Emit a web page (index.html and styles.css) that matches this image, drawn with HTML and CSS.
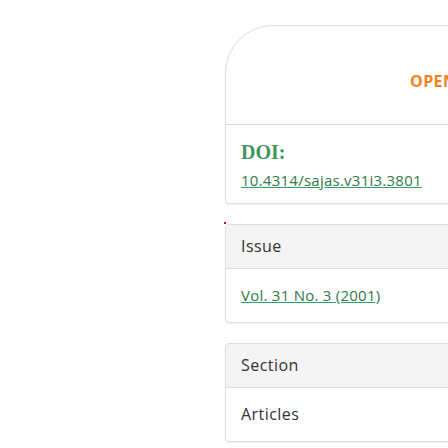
FILE: index.html
```html
<!DOCTYPE html>
<html>
<head>
<meta charset="utf-8">
<link rel="stylesheet" href="styles.css">
</head>
<body>
<div class="page">
  <div class="column">
    <section class="card card-doi">
      <div class="access"><span class="open">OPEN ACCESS</span></div>
      <div class="doi">
        <h2 class="doi-label">DOI:</h2>
        <div class="doi-value"><a class="link" href="#">10.4314/sajas.v31i3.3801</a></div>
      </div>
    </section>
    <section class="card card-panel marked">
      <div class="panel-head">Issue</div>
      <div class="panel-body"><a class="link" href="#">Vol. 31 No. 3 (2001)</a></div>
    </section>
    <section class="card card-panel">
      <div class="panel-head">Section</div>
      <div class="panel-body">Articles</div>
    </section>
  </div>
</div>
</body>
</html>
```
FILE: styles.css
```css
html, body {
  margin: 0;
  padding: 0;
  background: #ffffff;
  overflow: hidden;
}
body {
  font-family: "Open Sans", "Noto Sans", sans-serif;
  color: #333333;
  letter-spacing: 0.45px;
}
.page {
  width: 448px;
  height: 448px;
  overflow: hidden;
  padding-left: 225px;
  padding-top: 25px;
  box-sizing: border-box;
}
.column {
  width: 320px;
  display: flex;
  flex-direction: column;
  gap: 20px;
}
.card {
  border: 1px solid #dddddd;
  border-radius: 4px;
  background: #fff;
  box-shadow: 0 1px 1px rgba(0,0,0,0.05);
}
.card-doi {
  border-top-left-radius: 48px;
}
.access {
  height: 98px;
  display: flex;
  align-items: center;
  padding-left: 184px;
  border-bottom: 1px solid #dddddd;
}
.open {
  color: #f58220;
  font-weight: 700;
  font-size: 16px;
  letter-spacing: 0.4px;
  white-space: nowrap;
  margin-top: 11px;
}
.doi {
  padding: 14px 15px 9px;
}
.doi-label {
  margin: 0 0 1px;
  font-family: "Liberation Serif", serif;
  font-size: 20px;
  font-weight: 700;
  color: #3f9560;
  line-height: 26px;
  letter-spacing: 0;
}
.doi-value {
  line-height: 28px;
  height: 28px;
}
.link {
  color: #2f7a48;
  text-decoration: underline;
  text-decoration-color: #2fa36b;
  font-size: 15px;
  letter-spacing: 0.25px;
  white-space: nowrap;
}
.card-panel {
  overflow: hidden;
}
.panel-head {
  background: #f4f4f4;
  border-bottom: 1px solid #dddddd;
  height: 43px;
  line-height: 43px;
  padding-left: 15px;
  font-size: 16px;
  color: #333;
}
.panel-body {
  height: 53px;
  line-height: 53px;
  padding-left: 15px;
  font-size: 16px;
  color: #333;
}
.marked {
  position: relative;
  overflow: visible;
}
.marked::before {
  content: "";
  position: absolute;
  left: -2px;
  top: -3px;
  width: 2px;
  height: 2px;
  background: #e00000;
}
```
